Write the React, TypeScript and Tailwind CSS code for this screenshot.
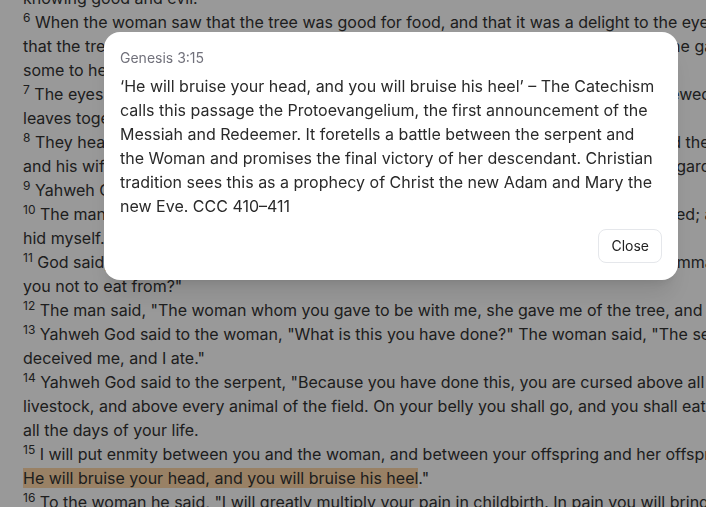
import React from "react";

interface Verse {
  n?: number;
  text: string;
  highlight?: string;
  after?: string;
}

const verses: Verse[] = [
  { text: "knowing good and evil.\"" },
  {
    n: 6,
    text: "When the woman saw that the tree was good for food, and that it was a delight to the eyes, and that the tree was to be desired to make one wise, she took some of its fruit, and ate. She gave some to her husband with her, and he ate.",
  },
  {
    n: 7,
    text: "The eyes of both of them were opened, and they knew that they were naked. They sewed fig leaves together, and made coverings for themselves.",
  },
  {
    n: 8,
    text: "They heard the voice of Yahweh God walking in the garden in the cool of the day, and the man and his wife hid themselves from the presence of Yahweh God among the trees of the garden.",
  },
  { n: 9, text: "Yahweh God called to the man, and said to him, \"Where are you?\"" },
  {
    n: 10,
    text: "The man said, \"I heard your voice in the garden, and I was afraid, because I was naked; and I hid myself.\"",
  },
  {
    n: 11,
    text: "God said, \"Who told you that you were naked? Have you eaten from the tree that I commanded you not to eat from?\"",
  },
  {
    n: 12,
    text: "The man said, \"The woman whom you gave to be with me, she gave me of the tree, and I ate.\"",
  },
  {
    n: 13,
    text: "Yahweh God said to the woman, \"What is this you have done?\" The woman said, \"The serpent deceived me, and I ate.\"",
  },
  {
    n: 14,
    text: "Yahweh God said to the serpent, \"Because you have done this, you are cursed above all livestock, and above every animal of the field. On your belly you shall go, and you shall eat dust all the days of your life.",
  },
  {
    n: 15,
    text: "I will put enmity between you and the woman, and between your offspring and her offspring. ",
    highlight: "He will bruise your head, and you will bruise his heel",
    after: ".\"",
  },
  {
    n: 16,
    text: "To the woman he said, \"I will greatly multiply your pain in childbirth. In pain you will bring forth children. Your desire will be for your husband, and he will rule over you.\"",
  },
];

export default function App() {
  return (
    <div
      className="relative h-[507px] overflow-hidden bg-white text-[#333]"
      style={{ fontFamily: "Inter, 'Noto Sans', sans-serif" }}
    >
      <div className="mt-[-14px] w-[782px] px-[23px] text-base leading-6">
        {verses.map((v, i) => (
          <p key={i}>
            {v.n !== undefined && <sup>{v.n}</sup>}
            {v.n !== undefined && " "}
            {v.text}
            {v.highlight && (
              <span className="bg-orange-200">{v.highlight}</span>
            )}
            {v.after}
          </p>
        ))}
      </div>

      <div className="fixed inset-0 bg-black/40" />

      <div className="fixed left-0 top-0 flex w-[782px] justify-center pt-8">
        <div className="w-[574px] rounded-2xl bg-white px-4 pt-4 pb-[17px] shadow-xl">
          <div className="text-sm leading-5 text-zinc-500">Genesis 3:15</div>
          <p className="mt-1.5 text-base leading-6 text-[#2a2a2a]">
            ‘He will bruise your head, and you will bruise his heel’ – The
            Catechism calls this passage the Protoevangelium, the first
            announcement of the Messiah and Redeemer. It foretells a battle
            between the serpent and the Woman and promises the final victory
            of her descendant. Christian tradition sees this as a prophecy of
            Christ the new Adam and Mary the new Eve. CCC 410–411
          </p>
          <div className="mt-[11px] flex justify-end">
            <button className="h-[34px] rounded-lg border border-gray-200 bg-white px-3 text-sm text-[#222]">
              Close
            </button>
          </div>
        </div>
      </div>
    </div>
  );
}
